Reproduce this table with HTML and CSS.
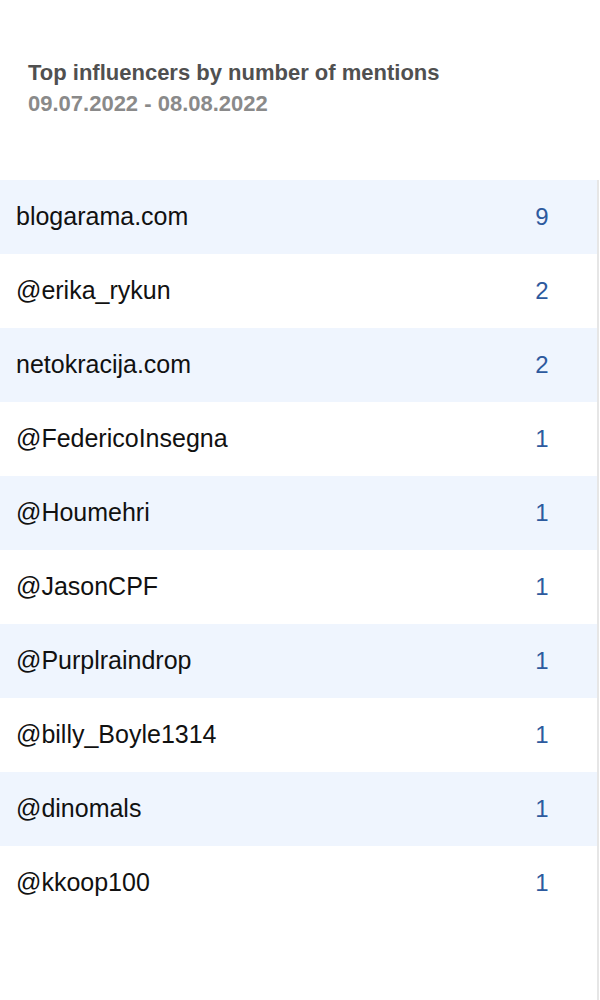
FILE: index.html
```html
<!DOCTYPE html>
<html lang="en">
  <head>
    <meta charset="UTF-8" />
    <meta name="viewport" content="width=device-width, initial-scale=1.0" />
    <title>Top influencers</title>
    <link rel="stylesheet" href="styles.css">
  </head>
  <body>
    <div class="widget">
      <div class="widget-header">
        <h2 class="title">Top influencers by number of mentions</h2>
        <p class="period">09.07.2022 - 08.08.2022</p>
      </div>
      <ul class="list">
        <li class="row"><span class="name">blogarama.com</span><span class="count">9</span></li>
        <li class="row"><span class="name">@erika_rykun</span><span class="count">2</span></li>
        <li class="row"><span class="name">netokracija.com</span><span class="count">2</span></li>
        <li class="row"><span class="name">@FedericoInsegna</span><span class="count">1</span></li>
        <li class="row"><span class="name">@Houmehri</span><span class="count">1</span></li>
        <li class="row"><span class="name">@JasonCPF</span><span class="count">1</span></li>
        <li class="row"><span class="name">@Purplraindrop</span><span class="count">1</span></li>
        <li class="row"><span class="name">@billy_Boyle1314</span><span class="count">1</span></li>
        <li class="row"><span class="name">@dinomals</span><span class="count">1</span></li>
        <li class="row"><span class="name">@kkoop100</span><span class="count">1</span></li>
      </ul>
    </div>
  </body>
</html>
```

FILE: styles.css
```css
body {
  margin: 0;
  background: #ffffff;
  font-family: "Liberation Sans", Arial, sans-serif;
}

.widget {
  width: 600px;
  min-height: 1000px;
}

.widget-header {
  padding: 59px 28px 0;
  height: 120px;
  box-sizing: border-box;
}

.title {
  margin: 0;
  font-size: 22px;
  font-weight: bold;
  color: #505050;
  line-height: 28px;
}

.period {
  margin: 3px 0 0;
  font-size: 22px;
  font-weight: bold;
  color: #8a8a8a;
  line-height: 28px;
}

.list {
  list-style: none;
  margin: 60px 0 0;
  padding: 0 0 80px;
  width: 599px;
  border-right: 2px solid #e6e6e6;
  box-sizing: border-box;
}

.row {
  display: flex;
  align-items: center;
  height: 74px;
  padding-left: 16px;
  padding-bottom: 1px;
  box-sizing: border-box;
}

.row:nth-child(odd) {
  background: #eff5fe;
}

.name {
  flex: 1;
  font-size: 25px;
  color: #111111;
}

.count {
  width: 60px;
  margin-right: 25px;
  text-align: center;
  font-size: 24px;
  color: #2d5a9e;
}
```
